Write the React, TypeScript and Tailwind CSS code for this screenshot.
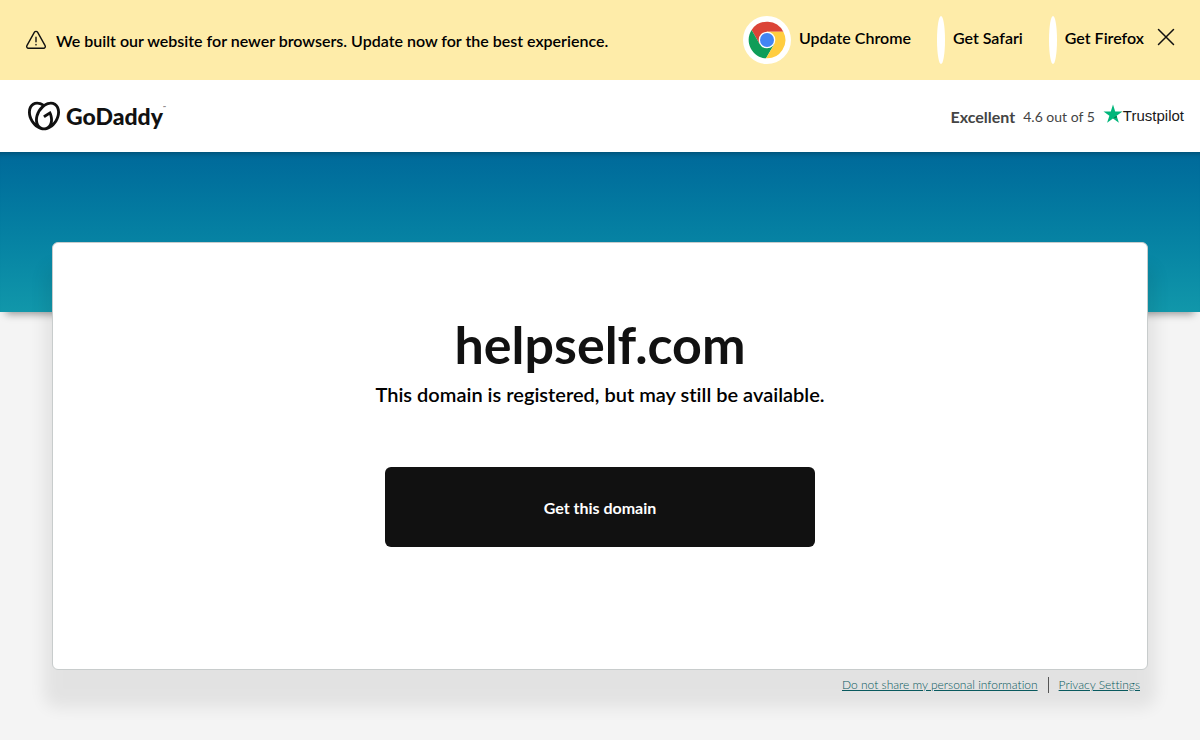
import { SiGodaddy } from "react-icons/si";

function WarningIcon() {
  return (
    <svg viewBox="0 0 24 24" className="size-6 shrink-0" fill="none" stroke="#111" strokeWidth="1.4" strokeLinecap="round" strokeLinejoin="round" aria-hidden="true">
      <path d="M10.3 4.3 2.9 17.6A1.8 1.8 0 0 0 4.5 20.3h15a1.8 1.8 0 0 0 1.6-2.7L13.7 4.3a2 2 0 0 0-3.4 0Z" />
      <path d="M12 9.3v4.4M12 16.5v.4" />
    </svg>
  );
}

function ChromeIcon() {
  return (
    <svg viewBox="0 0 48 48" className="size-10" aria-hidden="true">
      <path fill="#DB4437" d="M43.6 14A22 22 0 0 0 5.54 12.03L15.34 29 24 24V14Z" />
      <path fill="#0F9D58" d="M5.54 12.03A22 22 0 0 0 22.86 45.97L32.66 29 24 24 15.34 29Z" />
      <path fill="#FFCD40" d="M43.6 14A22 22 0 0 1 22.86 45.97L32.66 29 24 24V14Z" />
      <circle cx="24" cy="24" r="10" fill="#fff" />
      <circle cx="24" cy="24" r="8.4" fill="#4285F4" />
    </svg>
  );
}

function Banner() {
  return (
    <div className="flex h-20 items-center justify-between bg-[#feeca9] pr-6 pl-6 font-semibold">
      <div className="flex items-center gap-2">
        <WarningIcon />
        <p className="pt-0.5">We built our website for newer browsers. Update now for the best experience.</p>
      </div>
      <div className="flex items-center">
        <a href="#chrome" className="mr-[26px] flex items-center gap-2">
          <span className="flex size-12 items-center justify-center rounded-full bg-white">
            <ChromeIcon />
          </span>
          <span className="pb-1">Update Chrome</span>
        </a>
        <a href="#safari" className="mr-[26px] flex items-center gap-2">
          <span className="h-12 w-2 rounded-[50%] bg-white" />
          <span className="pb-1">Get Safari</span>
        </a>
        <a href="#firefox" className="flex items-center gap-2">
          <span className="h-12 w-2 rounded-[50%] bg-white" />
          <span className="pb-1">Get Firefox</span>
        </a>
        <button type="button" aria-label="Close" className="ml-3 pb-1.5">
          <svg viewBox="0 0 20 20" className="size-5" stroke="#111" strokeWidth="1.5" strokeLinecap="round" aria-hidden="true">
            <path d="m2.5 2.5 15 15M17.5 2.5l-15 15" />
          </svg>
        </button>
      </div>
    </div>
  );
}

function Header() {
  return (
    <header className="flex h-18 items-center justify-between bg-white pr-4 pl-7">
      <a href="#home" className="flex items-center gap-1.5 text-[#111]">
        <SiGodaddy className="size-8" aria-hidden="true" />
        <span className="flex items-start text-[23px] font-black">
          GoDaddy
          <span className="pt-1.5 text-[4px] font-normal">™</span>
        </span>
      </a>
      <div className="flex items-center gap-2 text-[#444]">
        <span className="pt-0.5 font-bold">Excellent</span>
        <span className="pt-0.5 text-sm">4.6 out of 5</span>
        <a href="#trustpilot" className="flex items-center font-['Liberation_Sans',sans-serif] text-[15px] text-[#191919]">
          <svg viewBox="0 0 20 20" className="mb-1 size-5" aria-hidden="true">
            <path fill="#00b67a" d="m10 .6 2.2 6.9h7.3l-5.9 4.2 2.3 7L10 14.4l-5.9 4.3 2.3-7L.5 7.5h7.3Z" />
            <path fill="#005128" fillOpacity=".7" d="m14.1 13.2-.5-1.5L10 14.4Z" />
          </svg>
          Trustpilot
        </a>
      </div>
    </header>
  );
}

export default function App() {
  return (
    <div className="min-h-screen bg-[#f4f4f4] font-['Lato',sans-serif] text-base text-black [font-variant-ligatures:none]">
      <Banner />
      <Header />
      <div className="h-40 bg-linear-to-b from-[#00699a] to-[#1197aa] shadow-[inset_0_6px_6px_-6px_rgba(0,0,0,0.4),0_8px_8px_-6px_rgba(0,0,0,0.4)]" />
      <div className="relative mx-13 -mt-[70px]">
        <main className="flex flex-col items-center rounded-md border border-[#c8cccc] bg-white pt-[69px] pb-[122px] shadow-[0_30px_16px_8px_rgba(0,0,0,0.07)]">
          <h1 className="text-[52px] leading-[64px] font-bold text-[#111]">helpself.com</h1>
          <p className="mt-1 text-xl leading-7 font-semibold">This domain is registered, but may still be available.</p>
          <button type="button" className="mt-[59px] h-20 w-full max-w-[430px] rounded-md bg-[#111] pt-0.5 font-bold text-white">
            Get this domain
          </button>
        </main>
        <footer className="flex items-center justify-end pt-1.5 pr-2 text-xs leading-[18px] font-light text-[#09595e]">
          <a href="#personal-information" className="underline">Do not share my personal information</a>
          <span className="mx-2.5 h-4 w-px bg-[#555]" />
          <a href="#privacy" className="underline">Privacy Settings</a>
        </footer>
      </div>
    </div>
  );
}
